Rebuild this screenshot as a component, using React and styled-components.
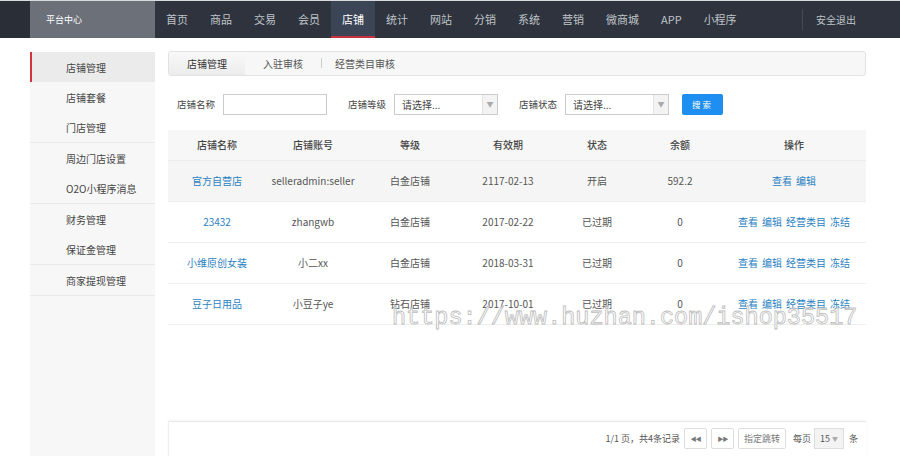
import styled, { createGlobalStyle } from "styled-components"

const GlobalStyle = createGlobalStyle`
  html, body {
    margin: 0;
    padding: 0;
    background: #fff;
    overflow: hidden;
  }
  body {
    font-family: "Noto Sans CJK SC", "Noto Sans", "Liberation Sans", sans-serif;
    color: #333;
  }
`

const TopBar = styled.div`
  display: flex;
  height: 38px;
  background: #2e333d;
  border-top: 1px solid #d8dadd;
  box-sizing: border-box;
`
const Corner = styled.div`
  width: 30px;
  background: #2a2e36;
`
const Logo = styled.div`
  width: 125px;
  background: #6b7079;
  color: #fff;
  font-size: 9px;
  display: flex;
  align-items: center;
  padding-left: 16px;
  box-sizing: border-box;
`
const Nav = styled.div`
  display: flex;
`
const NavItem = styled.div`
  padding: 0 11px;
  display: flex;
  align-items: center;
  font-size: 11px;
  color: ${p => (p.$active ? "#fff" : "#bfc3c9")};
  background: ${p => (p.$active ? "#3c4556" : "transparent")};
  border-bottom: 2px solid ${p => (p.$active ? "#c8303c" : "transparent")};
`
const Logout = styled.div`
  margin-left: auto;
  margin-top: 8px;
  margin-bottom: 8px;
  padding: 0 44px 0 13px;
  border-left: 1px solid #454b56;
  display: flex;
  align-items: center;
  font-size: 10px;
  color: #bfc3c9;
`

const Main = styled.div`
  display: flex;
  padding-top: 14px;
  height: 418px;
  box-sizing: border-box;
  position: relative;
`
const Sidebar = styled.div`
  margin-left: 30px;
  width: 125px;
  background: #f7f7f7;
  height: 420px;
`
const SideGroup = styled.div`
  border-bottom: 1px solid #e9e9e9;
`
const SideItem = styled.div`
  height: 30px;
  display: flex;
  align-items: center;
  padding-left: 34px;
  font-size: 10px;
  color: #444;
  background: ${p => (p.$active ? "#ebebeb" : "transparent")};
  border-left: 2px solid ${p => (p.$active ? "#d2343f" : "transparent")};
  box-sizing: border-box;
`

const Content = styled.div`
  margin-left: 13px;
  width: 698px;
  display: flex;
  flex-direction: column;
`
const Tabs = styled.div`
  display: flex;
  align-items: center;
  height: 29px;
  margin-top: -1px;
  border: 1px solid #e2e2e2;
  border-radius: 3px;
  background: #f7f7f7;
  box-sizing: border-box;
  overflow: hidden;
`
const Tab = styled.div`
  height: 100%;
  display: flex;
  align-items: center;
  font-size: 10px;
  color: ${p => (p.$active ? "#333" : "#555")};
  padding: 0 ${p => p.$pr || "18px"} 0 ${p => p.$pl || "18px"};
  background: ${p => (p.$active ? "linear-gradient(#f9f9f9, #ececec)" : "transparent")};
`
const TabSep = styled.span`
  width: 1px;
  height: 10px;
  background: #ccc;
`

const SearchRow = styled.div`
  display: flex;
  align-items: center;
  height: 22px;
  margin-top: 18px;
  padding-left: 9px;
  font-size: 9.5px;
  color: #444;
`
const Label = styled.span`
  margin-right: 8px;
  margin-left: ${p => p.$gap || "0"};
`
const Input = styled.div`
  width: 104px;
  height: 21px;
  border: 1px solid #ccc;
  box-sizing: border-box;
  background: #fff;
`
const Select = styled.div`
  width: ${p => p.$w};
  height: 21px;
  border: 1px solid #ccc;
  box-sizing: border-box;
  display: flex;
  align-items: center;
  font-size: 10px;
  color: #444;
  padding-left: 7px;
  background: #fff;
`
const Arrow = styled.span`
  margin-left: auto;
  width: 14px;
  height: 100%;
  border-left: 1px solid #e2e2e2;
  background: #f3f3f3;
  color: #aaa;
  font-size: 7px;
  display: flex;
  align-items: center;
  justify-content: center;
`
const SearchButton = styled.div`
  margin-left: 13px;
  width: 41px;
  height: 21px;
  border-radius: 2px;
  background: #1e8ff0;
  color: #fff;
  font-size: 8.5px;
  display: flex;
  align-items: center;
  justify-content: center;
  letter-spacing: 2px;
`

const Table = styled.div`
  margin-top: 15px;
  display: grid;
  grid-template-columns: 98px 94px 100px 96px 82px 84px 144px;
  font-size: 10px;
`
const HeadCell = styled.div`
  height: 30px;
  background: #f7f7f7;
  display: flex;
  align-items: center;
  justify-content: center;
  color: #444;
  font-weight: 500;
  border-bottom: 1px solid #ececec;
`
const Cell = styled.div`
  height: 40px;
  display: flex;
  align-items: center;
  justify-content: center;
  gap: 4px;
  color: ${p => (p.$link ? "#2a7fc1" : "#555")};
  background: ${p => (p.$hover ? "#f5f5f5" : "#fff")};
  border-bottom: 1px solid #eeeeee;
`
const ActionLink = styled.span`
  color: #2a7fc1;
`

const Footer = styled.div`
  margin-top: 96px;
  height: 40px;
  border-top: 1px solid #e8e8e8;
  box-shadow: 0 -1px 2px rgba(0, 0, 0, 0.04);
  border-left: 1px solid #eee;
  display: flex;
  align-items: center;
  justify-content: flex-end;
  padding-right: 8px;
  font-size: 9px;
  color: #555;
`
const PageInfo = styled.span`
  margin-right: 0;
`
const PageBtn = styled.div`
  height: 21px;
  width: ${p => p.$w || "23px"};
  border: 1px solid #ddd;
  border-radius: 2px;
  box-sizing: border-box;
  display: flex;
  align-items: center;
  justify-content: center;
  margin-left: 4px;
  font-size: ${p => (p.$small ? "6px" : "9px")};
  letter-spacing: ${p => (p.$small ? "-1px" : "0")};
  color: #777;
  background: #fff;
`
const PerPage = styled.span`
  margin: 0 3px 0 7px;
`
const PerSelect = styled.div`
  width: 30px;
  height: 21px;
  border: 1px solid #ddd;
  box-sizing: border-box;
  display: flex;
  align-items: center;
  justify-content: center;
  font-size: 9px;
  color: #555;
  background: #f3f3f3;
  margin-right: 5px;
`
const Caret = styled.span`
  font-size: 6px;
  color: #aaa;
  margin-left: 2px;
`

const Watermark = styled.div`
  position: absolute;
  left: 392px;
  top: 266px;
  font-family: "Liberation Mono", "DejaVu Sans Mono", monospace;
  font-size: 23.5px;
  color: rgba(255, 255, 255, 0.55);
  -webkit-text-stroke: 0.8px #bdbdbd;
  pointer-events: none;
  white-space: nowrap;
`

const navs = ["首页", "商品", "交易", "会员", "店铺", "统计", "网站", "分销", "系统", "营销", "微商城", "APP", "小程序"]

const sideGroups = [
  ["店铺管理", "店铺套餐", "门店管理"],
  ["周边门店设置", "O2O小程序消息"],
  ["财务管理", "保证金管理"],
  ["商家提现管理"],
]

const heads = ["店铺名称", "店铺账号", "等级", "有效期", "状态", "余额", "操作"]

const rows = [
  { name: "官方自营店", account: "selleradmin:seller", level: "白金店铺", date: "2117-02-13", status: "开启", balance: "592.2", actions: ["查看", "编辑"] },
  { name: "23432", account: "zhangwb", level: "白金店铺", date: "2017-02-22", status: "已过期", balance: "0", actions: ["查看", "编辑", "经营类目", "冻结"] },
  { name: "小维原创女装", account: "小二xx", level: "白金店铺", date: "2018-03-31", status: "已过期", balance: "0", actions: ["查看", "编辑", "经营类目", "冻结"] },
  { name: "豆子日用品", account: "小豆子ye", level: "钻石店铺", date: "2017-10-01", status: "已过期", balance: "0", actions: ["查看", "编辑", "经营类目", "冻结"] },
]

export default function App() {
  return (
    <>
      <GlobalStyle />
      <TopBar>
        <Corner />
        <Logo>平台中心</Logo>
        <Nav>
          {navs.map(n => (
            <NavItem key={n} $active={n === "店铺"}>{n}</NavItem>
          ))}
        </Nav>
        <Logout>安全退出</Logout>
      </TopBar>
      <Main>
        <Sidebar>
          {sideGroups.map((g, i) => (
            <SideGroup key={i}>
              {g.map(item => (
                <SideItem key={item} $active={item === "店铺管理"}>{item}</SideItem>
              ))}
            </SideGroup>
          ))}
        </Sidebar>
        <Content>
          <Tabs>
            <Tab $active>店铺管理</Tab>
            <Tab>入驻审核</Tab>
            <TabSep />
            <Tab $pl="13px">经营类目审核</Tab>
          </Tabs>
          <SearchRow>
            <Label>店铺名称</Label>
            <Input />
            <Label $gap="21px">店铺等级</Label>
            <Select $w="104px">请选择...<Arrow>▼</Arrow></Select>
            <Label $gap="21px">店铺状态</Label>
            <Select $w="104px">请选择...<Arrow>▼</Arrow></Select>
            <SearchButton>搜索</SearchButton>
          </SearchRow>
          <Table>
            {heads.map(h => (
              <HeadCell key={h}>{h}</HeadCell>
            ))}
            {rows.map((r, i) => (
              <Row key={i} row={r} hover={i === 0} />
            ))}
          </Table>
          <Footer>
            <PageInfo>1/1 页，共4条记录</PageInfo>
            <PageBtn $small>◀◀</PageBtn>
            <PageBtn $small>▶▶</PageBtn>
            <PageBtn $w="48px">指定跳转</PageBtn>
            <PerPage>每页</PerPage>
            <PerSelect>15<Caret>▼</Caret></PerSelect>
            <span>条</span>
          </Footer>
        </Content>
        <Watermark>https://www.huzhan.com/ishop35517</Watermark>
      </Main>
    </>
  )
}

function Row({ row, hover }) {
  return (
    <>
      <Cell $link $hover={hover}>{row.name}</Cell>
      <Cell $hover={hover}>{row.account}</Cell>
      <Cell $hover={hover}>{row.level}</Cell>
      <Cell $hover={hover}>{row.date}</Cell>
      <Cell $hover={hover}>{row.status}</Cell>
      <Cell $hover={hover}>{row.balance}</Cell>
      <Cell $hover={hover}>
        {row.actions.map(a => (
          <ActionLink key={a}>{a}</ActionLink>
        ))}
      </Cell>
    </>
  )
}
